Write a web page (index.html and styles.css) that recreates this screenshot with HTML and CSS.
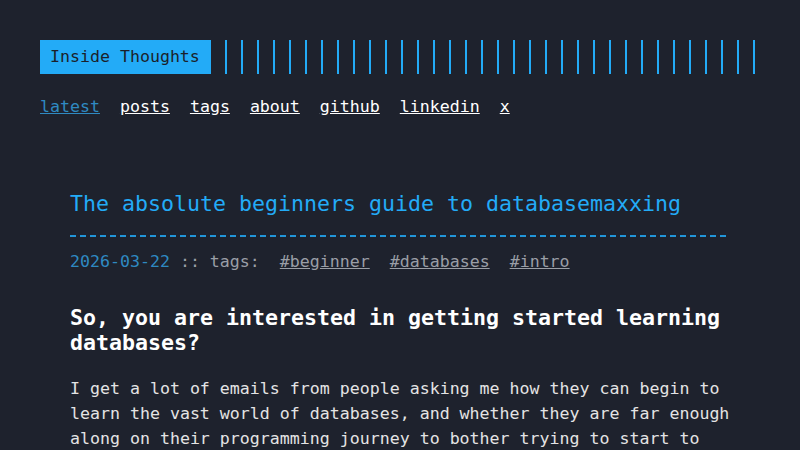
FILE: index.html
```
<!DOCTYPE html>
<html lang="en">
<head>
<meta charset="utf-8">
<title>Inside Thoughts</title>
<link rel="stylesheet" href="styles.css">
</head>
<body>
<div class="container">
  <header class="header">
    <div class="header-top">
      <a class="logo" href="#">Inside Thoughts</a>
      <div class="bars"></div>
    </div>
    <nav class="menu">
      <a class="menu-link active" href="#">latest</a>
      <a class="menu-link" href="#">posts</a>
      <a class="menu-link" href="#">tags</a>
      <a class="menu-link" href="#">about</a>
      <a class="menu-link" href="#">github</a>
      <a class="menu-link" href="#">linkedin</a>
      <a class="menu-link" href="#">x</a>
    </nav>
  </header>
  <main class="post">
    <h1 class="post-title">The absolute beginners guide to databasemaxxing</h1>
    <div class="post-rule"></div>
    <div class="post-meta">
      <span class="post-date">2026-03-22</span><span class="post-sep"> :: tags:</span><a class="post-tag" href="#">#beginner</a><a class="post-tag" href="#">#databases</a><a class="post-tag" href="#">#intro</a>
    </div>
    <h2 class="post-heading">So, you are interested in getting started learning databases?</h2>
    <p class="post-text">I get a lot of emails from people asking me how they can begin to learn the vast world of databases, and whether they are far enough along on their programming journey to bother trying to start to learn about them.</p>
  </main>
</div>
</body>
</html>
```
FILE: styles.css
```
html, body {
  margin: 0;
  padding: 0;
}
body {
  background: #1e222d;
  color: #e4e4e4;
  font-family: "DejaVu Sans Mono", monospace;
  font-size: 16.6px;
  line-height: 25px;
}
.container {
  padding: 40px;
}
.header-top {
  display: flex;
  height: 34px;
}
.logo {
  background: #23abf7;
  color: #1b1f2a;
  padding: 0 11px 0 10px;
  line-height: 34px;
  text-decoration: none;
  white-space: nowrap;
}
.bars {
  flex: 1;
  margin-left: 14px;
  background: repeating-linear-gradient(90deg, #23abf7 0, #23abf7 2px, transparent 2px, transparent 16px);
}
.menu {
  display: flex;
  gap: 20px;
  margin-top: 20px;
}
.menu-link {
  color: #ffffff;
  text-decoration: underline;
}
.menu-link.active {
  color: #2f8ac2;
}
.post {
  padding: 0 30px;
  margin-top: 71px;
}
.post-title {
  margin: 0;
  font-size: 21.6px;
  line-height: 28px;
  font-weight: normal;
  color: #23abf7;
}
.post-rule {
  margin-top: 17px;
  height: 2px;
  background: repeating-linear-gradient(90deg, #23abf7 0, #23abf7 6px, transparent 6px, transparent 10px);
  opacity: 0.85;
}
.post-meta {
  margin-top: 12px;
  color: #9a9ea6;
}
.post-date {
  color: #2f8ac2;
}
.post-tag {
  color: #9a9ea6;
  text-decoration: underline;
  margin-left: 20px;
}
.post-heading {
  margin: 31px 0 0;
  font-size: 21.6px;
  line-height: 25px;
  font-weight: bold;
  color: #ffffff;
}
.post-text {
  margin: 21px 0 0;
}
```
